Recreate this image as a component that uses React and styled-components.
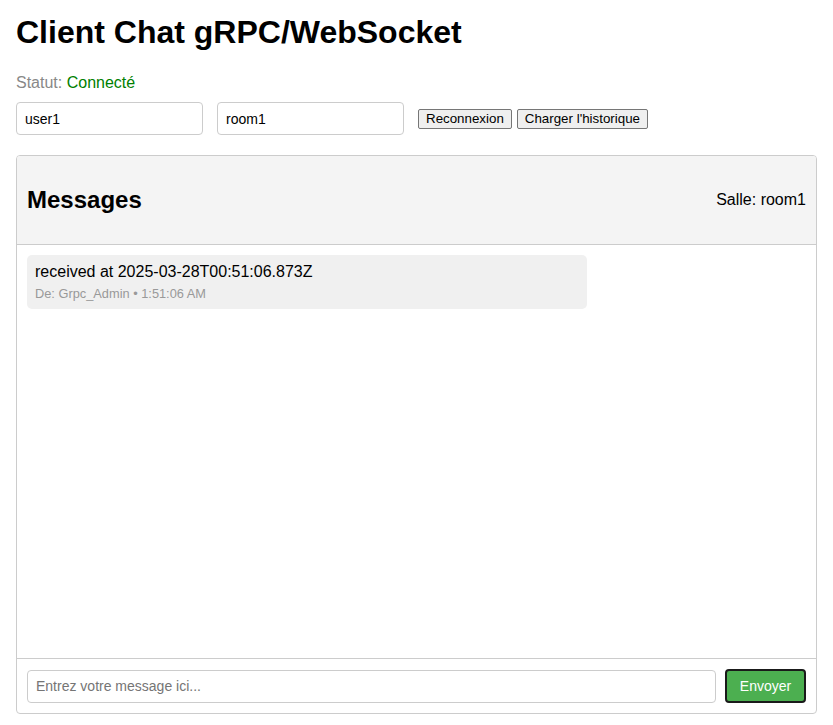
import React, { useState } from "react";
import styled, { createGlobalStyle } from "styled-components";

const GlobalStyle = createGlobalStyle`
    body {
        margin: 0;
        font-family: "Liberation Sans", Arial, sans-serif;
        background: #fff;
        color: #000;
    }
    * {
        box-sizing: border-box;
    }
`;

const Page = styled.div`
    max-width: 801px;
    margin: 0 auto;
    padding-top: 14px;
`;

const Title = styled.h1`
    margin: 0 0 23px;
    font-size: 32px;
    font-weight: 700;
`;

const Status = styled.p`
    margin: 0 0 10px;
    font-size: 16px;
    color: #888;
    span {
        color: ${(p) => (p.connected ? "#008000" : "#c00")};
    }
`;

const Controls = styled.div`
    display: flex;
    align-items: center;
    margin-bottom: 20px;
`;

const TextInput = styled.input`
    width: 187px;
    height: 33px;
    margin-right: 14px;
    padding: 0 8px;
    border: 1px solid #ccc;
    border-radius: 4px;
    font-family: "Liberation Sans", Arial, sans-serif;
    font-size: 14px;
    color: #000;
    outline: none;
`;

const PlainButton = styled.button`
    margin-right: ${(p) => p.gap || 0}px;
    padding: 1px 7px;
    height: 20px;
    border: 1px solid #767676;
    border-radius: 2px;
    background: #efefef;
    font-family: "Liberation Sans", Arial, sans-serif;
    font-size: 13.33px;
    color: #000;
    cursor: pointer;
`;

const ChatPanel = styled.div`
    display: flex;
    flex-direction: column;
    height: 559px;
    border: 1px solid #ccc;
    border-radius: 4px;
    overflow: hidden;
`;

const ChatHeader = styled.div`
    display: flex;
    justify-content: space-between;
    align-items: center;
    padding: 10px;
    background: #f4f4f4;
    border-bottom: 1px solid #ccc;
    h2 {
        margin: 19.92px 0;
        font-size: 24px;
        font-weight: 700;
    }
`;

const RoomLabel = styled.div`
    font-size: 16px;
`;

const MessageList = styled.div`
    flex: 1;
    padding: 10px;
    overflow-y: auto;
`;

const Bubble = styled.div`
    max-width: 560px;
    margin-bottom: 10px;
    padding: 8px;
    background: #f0f0f0;
    border-radius: 5px;
`;

const BubbleText = styled.div`
    font-size: 16px;
`;

const BubbleMeta = styled.div`
    margin-top: 5px;
    font-size: 12.8px;
    color: #999;
`;

const Composer = styled.div`
    display: flex;
    align-items: center;
    gap: 9px;
    padding: 10px;
    border-top: 1px solid #ccc;
`;

const MessageInput = styled.input`
    flex: 1;
    height: 33px;
    padding: 0 8px;
    border: 1px solid #ccc;
    border-radius: 4px;
    font-family: "Liberation Sans", Arial, sans-serif;
    font-size: 14px;
    outline: none;
    &::placeholder {
        color: #757575;
    }
`;

const SendButton = styled.button`
    width: 81px;
    height: 34px;
    border: 2px solid #1a1a1a;
    border-radius: 4px;
    background: #4caf50;
    color: #fff;
    font-family: "Liberation Sans", Arial, sans-serif;
    font-size: 14px;
    cursor: pointer;
`;

const messages = [
    { id: 1, text: "received at 2025-03-28T00:51:06.873Z", from: "Grpc_Admin", time: "1:51:06 AM" },
];

export default function App() {
    const [user, setUser] = useState("user1");
    const [room, setRoom] = useState("room1");
    const [draft, setDraft] = useState("");
    return (
        <Page>
            <GlobalStyle />
            <Title>Client Chat gRPC/WebSocket</Title>
            <Status connected>Statut: <span>Connecté</span></Status>
            <Controls>
                <TextInput value={user} onChange={(e) => setUser(e.target.value)} />
                <TextInput value={room} onChange={(e) => setRoom(e.target.value)} />
                <PlainButton gap={5}>Reconnexion</PlainButton>
                <PlainButton>Charger l'historique</PlainButton>
            </Controls>
            <ChatPanel>
                <ChatHeader>
                    <h2>Messages</h2>
                    <RoomLabel>Salle: {room}</RoomLabel>
                </ChatHeader>
                <MessageList>
                    {messages.map((m) => (
                        <Bubble key={m.id}>
                            <BubbleText>{m.text}</BubbleText>
                            <BubbleMeta>De: {m.from} • {m.time}</BubbleMeta>
                        </Bubble>
                    ))}
                </MessageList>
                <Composer>
                    <MessageInput
                        placeholder="Entrez votre message ici..."
                        value={draft}
                        onChange={(e) => setDraft(e.target.value)}
                    />
                    <SendButton>Envoyer</SendButton>
                </Composer>
            </ChatPanel>
        </Page>
    );
}
